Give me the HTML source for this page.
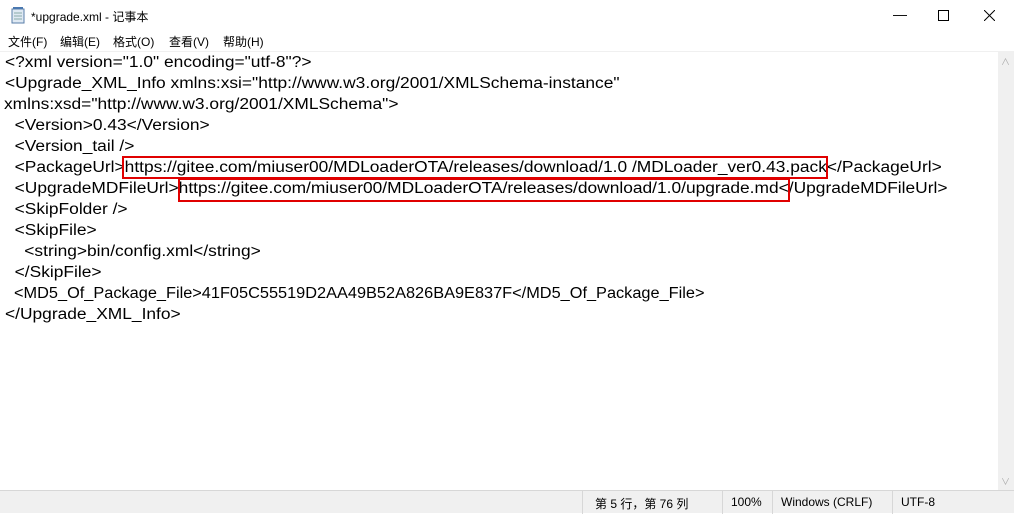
<!DOCTYPE html>
<html><head><meta charset="utf-8"><style>
*{margin:0;padding:0;box-sizing:border-box}
body{width:1014px;height:513px;overflow:hidden;background:#fff;font-family:"Liberation Sans","Noto Sans CJK SC",sans-serif;position:relative}
.title{position:absolute;left:0;top:0;width:1014px;height:31px;background:#fff;font-size:12px;color:#000}
.title .t{position:absolute;left:31px;top:8px}
.ctl{position:absolute;top:6px;font-size:14px;color:#000}
.menu{position:absolute;top:31px;left:0;height:20px;width:1014px;font-size:12px}
.menu span{position:absolute;top:2px}
.edit{position:absolute;left:0;top:51px;width:998px;height:439px;border-top:1px solid #f0f0f0}
.ln{position:absolute;left:5px;font-size:15.3px;white-space:pre;color:#000;transform:scaleX(1.135);transform-origin:0 0}
.box{position:absolute;border:2px solid #e00000}
.sb{position:absolute;left:998px;top:51px;width:16px;height:439px;background:#f0f0f0}
.status{position:absolute;left:0;top:490px;width:1014px;height:23px;background:#f0f0f0;border-top:1px solid #d7d7d7;font-size:12px}
.status span{position:absolute;top:4px}
.sep{position:absolute;top:0;width:1px;height:23px;background:#d7d7d7}
</style></head><body>
<div class="title">
<svg style="position:absolute;left:10px;top:7px" width="16" height="17"><rect x="2" y="2" width="12" height="14" fill="#dfe9f3" stroke="#5a7ea8"/><line x1="4" y1="6" x2="12" y2="6" stroke="#8aa"/><line x1="4" y1="9" x2="12" y2="9" stroke="#8aa"/><line x1="4" y1="12" x2="12" y2="12" stroke="#8aa"/><rect x="3" y="0" width="10" height="2" fill="#4a78b0"/></svg>
<span class="t">*upgrade.xml - 记事本</span>
<span class="ctl" style="left:893px">&#8212;</span>
<svg class="ctl" style="left:938px;top:10px" width="11" height="11"><rect x="0.5" y="0.5" width="10" height="10" fill="none" stroke="#000"/></svg>
<svg class="ctl" style="left:984px;top:10px" width="11" height="11"><path d="M0 0L11 11M11 0L0 11" stroke="#000"/></svg>
</div>
<div class="menu"><span style="left:8px">文件(F)</span><span style="left:60px">编辑(E)</span><span style="left:113px">格式(O)</span><span style="left:169px">查看(V)</span><span style="left:223px">帮助(H)</span></div>
<div class="edit"></div>
<div class="ln" style="top:54px">&lt;?xml version="1.0" encoding="utf-8"?&gt;</div>
<div class="ln" style="top:75px">&lt;Upgrade_XML_Info xmlns:xsi="http://www.w3.org/2001/XMLSchema-instance"</div>
<div class="ln" style="top:96px;left:4px">xmlns:xsd="http://www.w3.org/2001/XMLSchema"&gt;</div>
<div class="ln" style="top:117px">  &lt;Version&gt;0.43&lt;/Version&gt;</div>
<div class="ln" style="top:138px">  &lt;Version_tail /&gt;</div>
<div class="ln" style="top:159px">  &lt;PackageUrl&gt;https://gitee.com/miuser00/MDLoaderOTA/releases/download/1.0 /MDLoader_ver0.43.pack&lt;/PackageUrl&gt;</div>
<div class="ln" style="top:180px">  &lt;UpgradeMDFileUrl&gt;https://gitee.com/miuser00/MDLoaderOTA/releases/download/1.0/upgrade.md&lt;/UpgradeMDFileUrl&gt;</div>
<div class="ln" style="top:201px">  &lt;SkipFolder /&gt;</div>
<div class="ln" style="top:222px">  &lt;SkipFile&gt;</div>
<div class="ln" style="top:243px">    &lt;string&gt;bin/config.xml&lt;/string&gt;</div>
<div class="ln" style="top:264px">  &lt;/SkipFile&gt;</div>
<div class="ln" style="top:285px;left:14px;transform:scaleX(1.067)">&lt;MD5_Of_Package_File&gt;41F05C55519D2AA49B52A826BA9E837F&lt;/MD5_Of_Package_File&gt;</div>
<div class="ln" style="top:306px">&lt;/Upgrade_XML_Info&gt;</div>
<div class="box" style="left:122px;top:156px;width:706px;height:23px"></div>
<div class="box" style="left:178px;top:178px;width:612px;height:24px"></div>
<div class="sb"><span style="position:absolute;left:3px;top:4px;font-size:9px;color:#aaa">&#8743;</span><span style="position:absolute;left:3px;top:424px;font-size:9px;color:#aaa">&#8744;</span></div>
<div class="status">
<div class="sep" style="left:582px"></div><div class="sep" style="left:722px"></div><div class="sep" style="left:772px"></div><div class="sep" style="left:892px"></div>
<span style="left:595px">第 5 行，第 76 列</span><span style="left:731px">100%</span><span style="left:781px">Windows (CRLF)</span><span style="left:901px">UTF-8</span>
</div>
</body></html>
